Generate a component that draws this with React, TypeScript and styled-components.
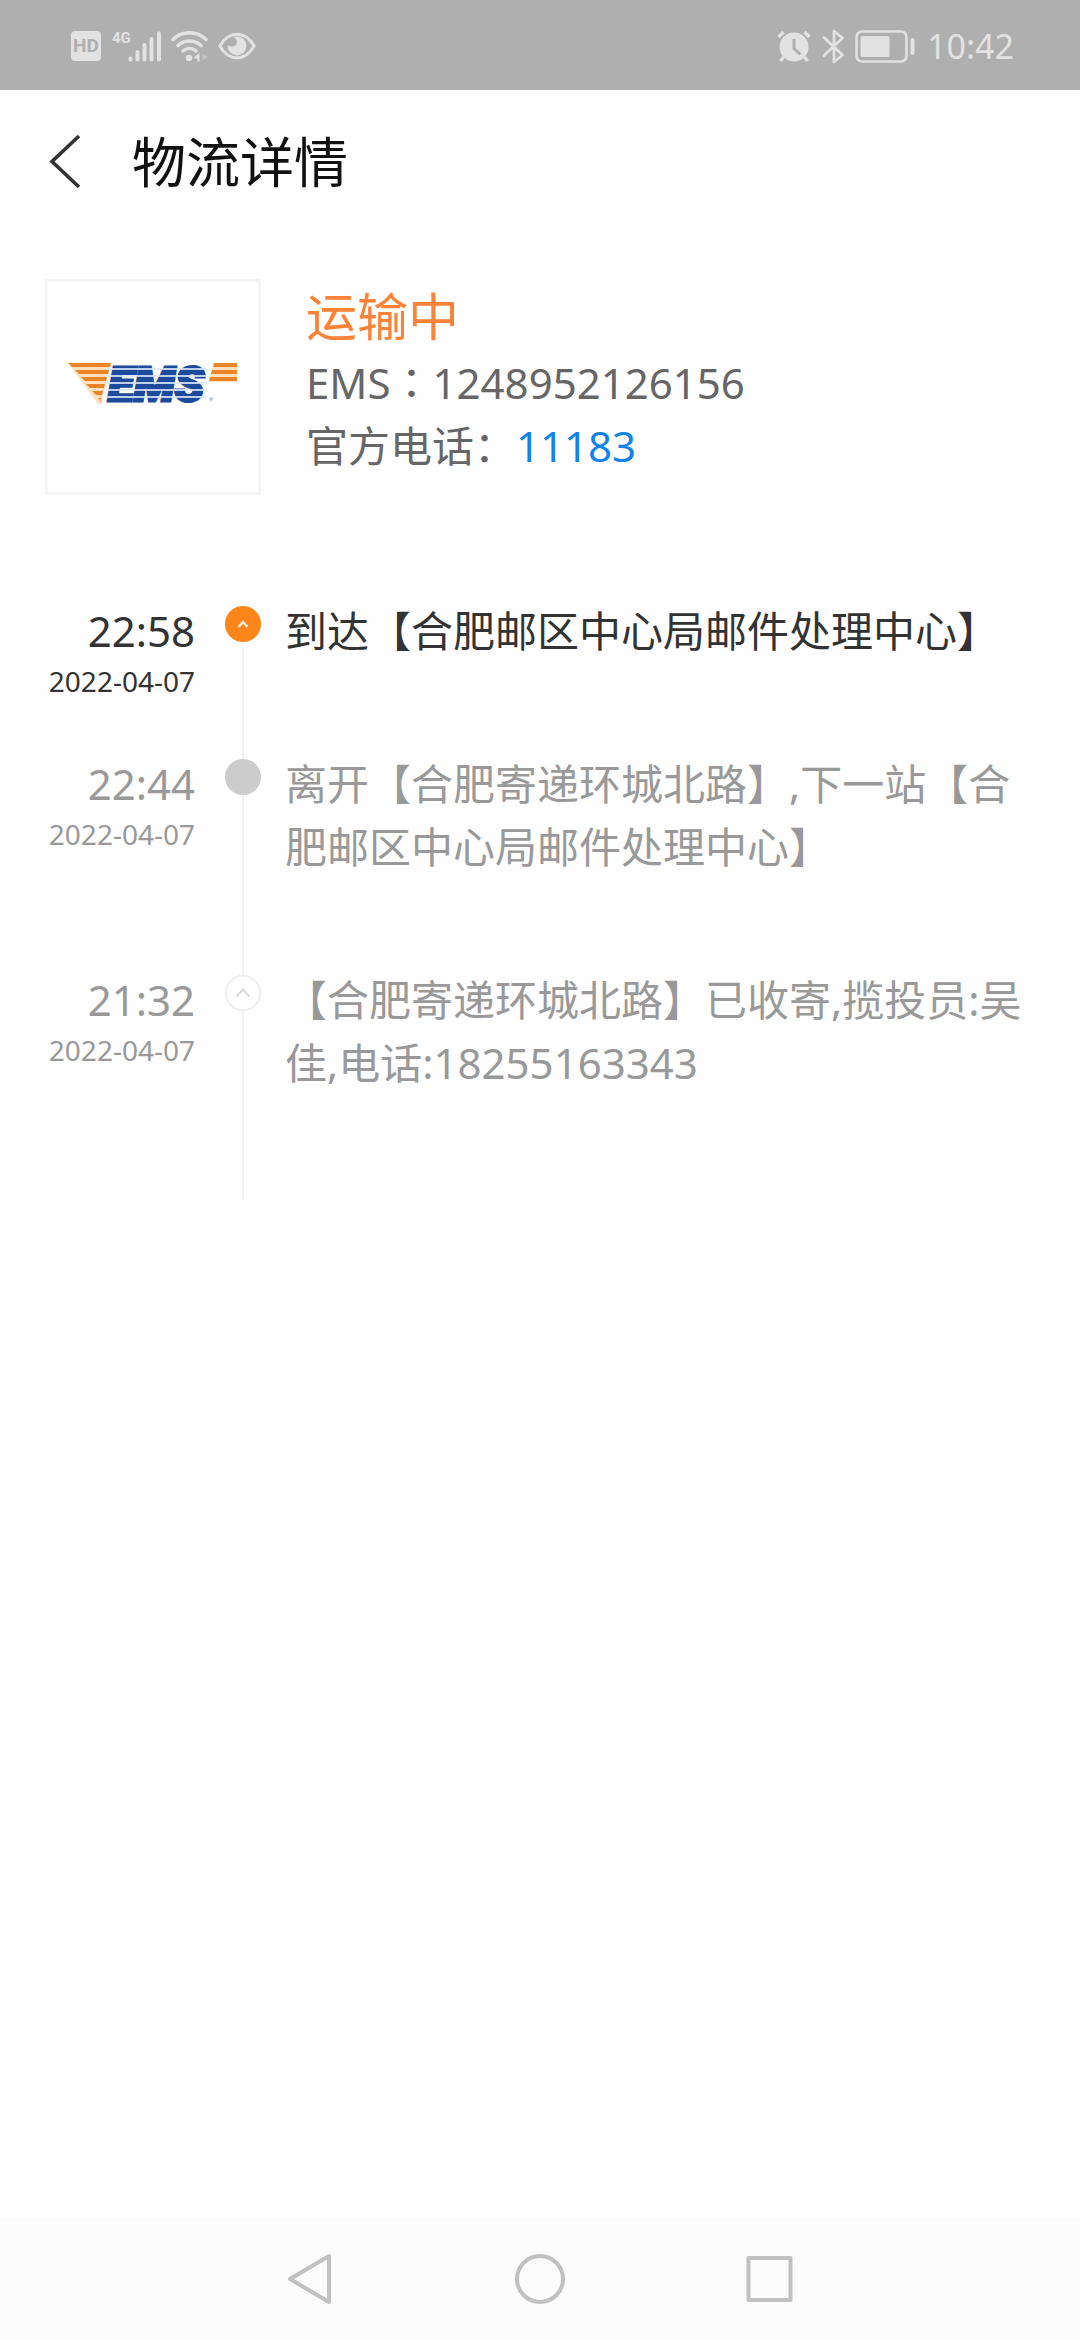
import React from "react";
import styled, { createGlobalStyle } from "styled-components";

const GlobalStyle = createGlobalStyle`
  *, *::before, *::after { box-sizing: border-box; }
  body {
    margin: 0;
    background: #fefefe;
    font-family: "Noto Sans", "Noto Sans CJK SC", sans-serif;
  }
  button { padding: 0; border: 0; background: none; font: inherit; cursor: pointer; }
  svg { display: block; }
`;

const Page = styled.div`
  display: flex;
  flex-direction: column;
  min-height: 100vh;
`;

const StatusBar = styled.div`
  display: flex;
  align-items: center;
  justify-content: space-between;
  height: 90px;
  padding: 2px 66px 0 71px;
  background: #afafaf;
  color: #e2e2e2;
`;

const StatusGroup = styled.div<{ $gap: number }>`
  display: flex;
  align-items: center;
  gap: ${(p) => p.$gap}px;
`;

const HdBadge = styled.span`
  width: 30px;
  height: 30px;
  border-radius: 4px;
  background: #e2e2e2;
  color: #afafaf;
  font-family: Roboto, sans-serif;
  font-size: 19px;
  font-weight: 700;
  line-height: 30px;
  text-align: center;
`;

const Signal = styled.div`
  display: flex;
  align-items: flex-start;
  margin-left: 2px;
`;

const NetworkType = styled.span`
  width: 16px;
  font-family: Roboto, sans-serif;
  font-size: 15px;
  font-weight: 700;
  line-height: 14px;
`;

const Clock = styled.span`
  margin-left: 2px;
  font-size: 34px;
  line-height: 48px;
`;

const Header = styled.header`
  display: flex;
  align-items: center;
  gap: 45px;
  height: 144px;
  padding: 0 45px;
`;

const BackButton = styled.button`
  width: 42px;
  height: 60px;
`;

const Title = styled.h1`
  margin: 0;
  color: #111;
  font-size: 54px;
  font-weight: 400;
  line-height: 72px;
`;

const Main = styled.main`
  flex: 1;
`;

const Summary = styled.section`
  display: flex;
  gap: 45px;
  padding: 45px 45px 0;
`;

const CarrierLogo = styled.div`
  flex: none;
  width: 216px;
  height: 216px;
  border: 3px solid #f5f5f5;
  background: #fff;
`;

const SummaryText = styled.div`
  flex: 1;
  padding-top: 2px;
`;

const State = styled.p`
  margin: 0;
  color: #fb8337;
  font-size: 51px;
  line-height: 70px;
`;

const InfoLine = styled.p`
  margin: 0;
  color: #666;
  font-size: 42px;
  line-height: 63px;
`;

const CenteredColon = styled.span`
  font-family: "Noto Sans CJK TC", sans-serif;
  line-height: 1;
`;

const PhoneLink = styled.a`
  color: #1283e8;
  text-decoration: none;
`;

const Timeline = styled.ol`
  margin: 104px 0 0;
  padding: 0 45px 15px;
  list-style: none;
`;

const Step = styled.li<{ $active?: boolean }>`
  display: flex;
  color: ${(p) => (p.$active ? "#333" : "#999")};
`;

const When = styled.time`
  flex: none;
  display: flex;
  flex-direction: column;
  width: 150px;
  text-align: right;
`;

const Hour = styled.span`
  font-size: 42px;
  line-height: 63px;
`;

const Day = styled.span`
  font-size: 28px;
  line-height: 38px;
  white-space: nowrap;
`;

const Rail = styled.div`
  flex: none;
  display: flex;
  flex-direction: column;
  align-items: center;
  width: 36px;
  margin: 7px 24px -7px 30px;
`;

const Line = styled.div<{ $last?: boolean }>`
  flex: 1;
  width: 2px;
  margin-bottom: ${(p) => (p.$last ? -9 : 0)}px;
  background: #f3f3f3;
`;

const Description = styled.p`
  flex: 1;
  margin: 0;
  padding-bottom: 90px;
  font-size: 42px;
  line-height: 63px;
`;

const NavBar = styled.nav`
  display: flex;
  align-items: center;
  justify-content: center;
  gap: 170px;
  height: 122px;
  background: #fcfcfc;
`;

const NavButton = styled.button`
  width: 60px;
  height: 60px;
`;

type Kind = "current" | "passed" | "start";

const steps: { hour: string; day: string; kind: Kind; text: string }[] = [
  { hour: "22:58", day: "2022-04-07", kind: "current", text: "到达【合肥邮区中心局邮件处理中心】" },
  { hour: "22:44", day: "2022-04-07", kind: "passed", text: "离开【合肥寄递环城北路】,下一站【合肥邮区中心局邮件处理中心】" },
  { hour: "21:32", day: "2022-04-07", kind: "start", text: "【合肥寄递环城北路】已收寄,揽投员:吴佳,电话:18255163343" },
];

function Marker({ kind }: { kind: Kind }) {
  return (
    <svg width="36" height="36" viewBox="0 0 36 36" fill="none" aria-hidden="true">
      {kind === "current" && (
        <>
          <circle cx="18" cy="18" r="18" fill="#fd8519" />
          <path d="M13.5 21l4.5-5 4.5 5" stroke="#fff0df" strokeWidth="2.4" />
        </>
      )}
      {kind === "passed" && <circle cx="18" cy="18" r="18" fill="#ccc" />}
      {kind === "start" && (
        <>
          <circle cx="18" cy="18" r="17.2" fill="#fff" stroke="#ebebeb" strokeWidth="1.6" />
          <path d="M11.5 21.5l6.5-7 6.5 7" stroke="#d2d2d2" strokeWidth="1.8" />
        </>
      )}
    </svg>
  );
}

const leftWing = [
  [20, 63], [27, 61], [33, 59], [38, 57], [44, 55], [50, 53],
];
const rightWing = [166, 164, 162];

function EmsLogo() {
  return (
    <svg width="210" height="210" viewBox="0 0 210 210" role="img" aria-label="EMS">
      <path d="M20 81H63L53 122H50Z" fill="#fde0bd" />
      <path d="M166 81H189V100H161Z" fill="#fde0bd" />
      {leftWing.map(([a, b], i) => (
        <path key={i} d={`M${a} ${81 + i * 7}H${b}l-1 4H${a + 4}Z`} fill="#ea8424" />
      ))}
      {rightWing.map((a, i) => (
        <path key={i} d={`M${a} ${81 + i * 7}H189v4H${a - 1}Z`} fill="#ea8424" />
      ))}
      <text
        x="60"
        y="119"
        fill="#1c4a9c"
        stroke="#1c4a9c"
        strokeWidth="3"
        fontFamily="Roboto, sans-serif"
        fontSize="48"
        fontWeight="900"
        fontStyle="italic"
      >
        EMS
      </text>
      {[0, 1, 2, 3, 4].map((i) => (
        <rect key={i} x="58" y={86 + i * 7} width="101" height="2" fill="#dbe8f8" opacity="0.85" />
      ))}
      <circle cx="163" cy="117" r="2" fill="#b9cbe8" />
    </svg>
  );
}

function SignalBars() {
  return (
    <svg width="34" height="31" viewBox="0 0 34 31" stroke="#e2e2e2" strokeWidth="4" strokeLinecap="round" aria-hidden="true">
      <path d="M2.5 27.5v1M9.5 21v7.500M16.500 14v14.500M23.500 8v20.500M31 2.500v26" />
    </svg>
  );
}

function WifiIcon() {
  return (
    <svg width="38" height="31" viewBox="0 0 38 31" fill="none" stroke="#e2e2e2" strokeWidth="3.600" strokeLinecap="round" aria-hidden="true">
      <path d="M2 8.500C11-.5 26-.5 35 8.500M7 14.500c6.500-6 16.500-6 23 0M12 20c4-3.400 9-3.400 13 0" />
      <circle cx="18" cy="27" r="3.200" fill="#e2e2e2" stroke="none" />
      <path d="M28.500 22v8.500h-2v-3H23.500v-1.500Z" fill="#e2e2e2" stroke="none" />
      <path d="M31.500 22.500v7l5-3.500Z" fill="#c4c4c4" stroke="none" />
    </svg>
  );
}

function EyeIcon() {
  return (
    <svg width="38" height="28" viewBox="0 0 38 28" fill="none" aria-hidden="true">
      <path d="M1.800 14C11-1.800 27-1.800 36.200 14 27 29.800 11 29.800 1.800 14Z" stroke="#e2e2e2" strokeWidth="3" strokeLinejoin="round" />
      <path d="M19 4.500a9.500 9.500 0 1 1-9.400 8.500c3 2.600 9 1.500 9.400-2.500.2-2.500-1.500-4.500-3.500-5.200a9.500 9.500 0 0 1 3.500-.8Z" fill="#e2e2e2" />
    </svg>
  );
}

function AlarmIcon() {
  return (
    <svg width="36" height="33" viewBox="0 0 36 33" fill="none" aria-hidden="true">
      <circle cx="18" cy="17" r="14.500" fill="#e2e2e2" />
      <path d="M2.500 7l5-5M33.500 7l-5-5M7.500 27l-3 4M28.500 27l3 4" stroke="#e2e2e2" strokeWidth="3.400" />
      <path d="M18 9v9.500l6.500 6" stroke="#afafaf" strokeWidth="3" />
    </svg>
  );
}

function BluetoothIcon() {
  return (
    <svg width="23" height="35" viewBox="0 0 23 35" fill="none" stroke="#e2e2e2" strokeWidth="2.800" strokeLinejoin="round" strokeLinecap="round" aria-hidden="true">
      <path d="M2 8.500l18.500 17.500-8.500 7V2l8.500 7L2 26.500" />
    </svg>
  );
}

function BatteryIcon() {
  return (
    <svg width="60" height="33" viewBox="0 0 60 33" fill="none" aria-hidden="true">
      <rect x="1.500" y="1.500" width="50" height="30" rx="5.500" stroke="#e2e2e2" strokeWidth="2.600" />
      <rect x="5.500" y="6" width="29" height="21" rx="2" fill="#e2e2e2" />
      <rect x="55.500" y="8" width="4" height="17" rx="2" fill="#e2e2e2" />
    </svg>
  );
}

export default function App() {
  return (
    <Page>
      <GlobalStyle />
      <StatusBar>
        <StatusGroup $gap={9}>
          <HdBadge>HD</HdBadge>
          <Signal>
            <NetworkType>4G</NetworkType>
            <SignalBars />
          </Signal>
          <WifiIcon />
          <EyeIcon />
        </StatusGroup>
        <StatusGroup $gap={10}>
          <AlarmIcon />
          <BluetoothIcon />
          <BatteryIcon />
          <Clock>10:42</Clock>
        </StatusGroup>
      </StatusBar>

      <Header>
        <BackButton type="button" aria-label="返回">
          <svg width="42" height="60" viewBox="0 0 42 60" fill="none" stroke="#333" strokeWidth="3.600">
            <path d="M34 4L7 29.500 34 55" />
          </svg>
        </BackButton>
        <Title>物流详情</Title>
      </Header>

      <Main>
        <Summary>
          <CarrierLogo>
            <EmsLogo />
          </CarrierLogo>
          <SummaryText>
            <State>运输中</State>
            <InfoLine>
              EMS<CenteredColon lang="zh-TW">：</CenteredColon>1248952126156
            </InfoLine>
            <InfoLine>
              官方电话：<PhoneLink href="tel:11183">11183</PhoneLink>
            </InfoLine>
          </SummaryText>
        </Summary>

        <Timeline>
          {steps.map((s, i) => (
            <Step key={s.hour} $active={s.kind === "current"}>
              <When dateTime={`${s.day}T${s.hour}`}>
                <Hour>{s.hour}</Hour>
                <Day>{s.day}</Day>
              </When>
              <Rail>
                <Marker kind={s.kind} />
                <Line $last={i === steps.length - 1} />
              </Rail>
              <Description>{s.text}</Description>
            </Step>
          ))}
        </Timeline>
      </Main>

      <NavBar aria-label="系统导航">
        <NavButton type="button" aria-label="返回上一页">
          <svg width="60" height="60" viewBox="0 0 60 60" fill="none" stroke="#c1c1c1" strokeWidth="4" strokeLinejoin="round">
            <path d="M49 7v46L10 30Z" />
          </svg>
        </NavButton>
        <NavButton type="button" aria-label="主屏幕">
          <svg width="60" height="60" viewBox="0 0 60 60" fill="none" stroke="#c1c1c1" strokeWidth="4">
            <circle cx="30" cy="30" r="23" />
          </svg>
        </NavButton>
        <NavButton type="button" aria-label="最近任务">
          <svg width="60" height="60" viewBox="0 0 60 60" fill="none" stroke="#c1c1c1" strokeWidth="4" strokeLinejoin="round">
            <rect x="8.500" y="9" width="42" height="42" />
          </svg>
        </NavButton>
      </NavBar>
    </Page>
  );
}
